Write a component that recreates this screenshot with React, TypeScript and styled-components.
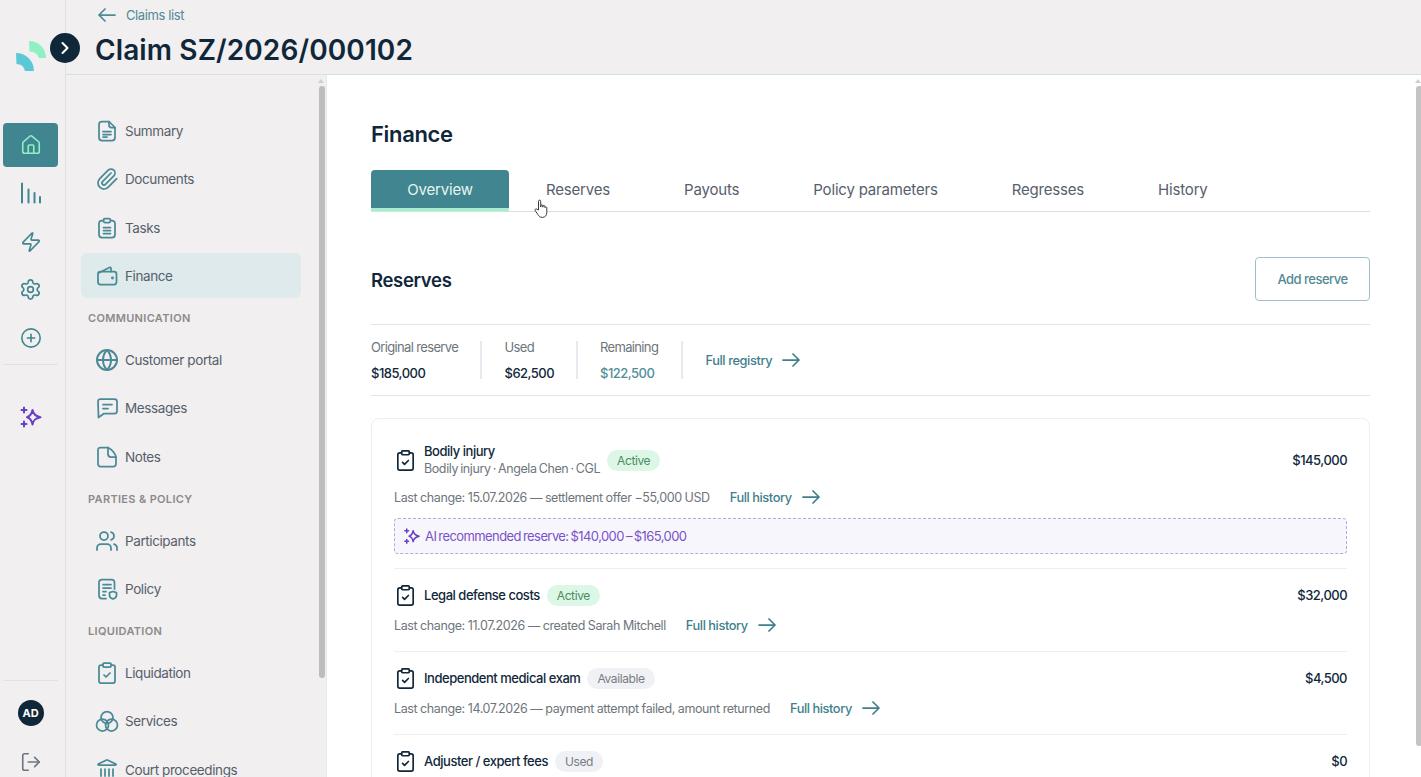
import React, {FunctionComponent, ReactNode} from 'react'
import styled, {createGlobalStyle} from 'styled-components'
import {
    ChevronRight,
    CirclePlus,
    ClipboardCheck,
    Globe,
    House,
    Landmark,
    LogOut,
    Paperclip,
    Settings,
    Users,
    Zap
} from 'lucide-react'

const GlobalStyle = createGlobalStyle`
  html, body {
    margin: 0;
    height: 100%;
    overflow: hidden;
    background: #f1eff0;
    color: #10273a;
    font-family: 'Inter', 'Liberation Sans', sans-serif;
    letter-spacing: -0.025em;
  }
`

const Page = styled.div`
  position: relative;
  display: grid;
  grid-template-columns: 66px 1fr;
  height: 777px;
  overflow: hidden;
`

const Rail = styled.aside`
  display: flex;
  flex-direction: column;
  align-items: center;
  border-right: 1px solid #d9e0e6;
  padding: 40px 7px 2px 3px;
  box-sizing: border-box;
`

const LogoMark = styled.svg`
  width: 32px;
  height: 32px;
  margin-bottom: 51px;
  flex-shrink: 0;
`

const RailItem = styled.div<{$active?: boolean}>`
  display: flex;
  align-items: center;
  justify-content: center;
  width: 55px;
  height: 44px;
  margin-bottom: 4.3px;
  flex-shrink: 0;
  border-radius: 4px;
  background: ${p => (p.$active ? '#40858f' : 'transparent')};
  color: ${p => (p.$active ? '#8ff0c4' : '#40858f')};
`

const RailRule = styled.div`
  width: 55px;
  height: 1px;
  flex-shrink: 0;
  background: #dfe3e8;
`

const TopRule = styled(RailRule)`
  margin-bottom: 30px;
`

const BottomRule = styled(RailRule)`
  margin-top: auto;
  margin-bottom: 19px;
`

const Avatar = styled.div`
  display: flex;
  align-items: center;
  justify-content: center;
  width: 26px;
  height: 26px;
  margin-bottom: 25px;
  flex-shrink: 0;
  border-radius: 50%;
  background: #10273a;
  color: #fff;
  font-size: 11px;
  font-weight: 700;
  letter-spacing: 0;
`

const Logout = styled.div`
  display: flex;
  height: 24px;
  color: #6d7680;
`

const Toggle = styled.div`
  position: absolute;
  left: 50px;
  top: 33px;
  z-index: 2;
  display: flex;
  align-items: center;
  justify-content: center;
  width: 30px;
  height: 30px;
  border-radius: 50%;
  background: #10273a;
  color: #fff;
`

const Right = styled.div`
  display: flex;
  flex-direction: column;
  min-width: 0;
  height: 777px;
`

const Header = styled.header`
  height: 75px;
  flex-shrink: 0;
  padding: 5px 0 0 29px;
  box-sizing: border-box;
  border-bottom: 1px solid #d5dfe6;
`

const BackLink = styled.div`
  display: flex;
  align-items: center;
  gap: 10px;
  height: 20px;
  padding-left: 3px;
  color: #4f8a96;
  font-size: 13px;
`

const ClaimTitle = styled.h1`
  margin: 5px 0 0;
  font-size: 28px;
  line-height: 40px;
  font-weight: 600;
  letter-spacing: 0.004em;
  color: #10273a;
`

const Body = styled.div`
  flex: 1;
  display: grid;
  grid-template-columns: 261px 1fr;
  min-height: 0;
`

const SubNav = styled.nav`
  position: relative;
  display: flex;
  flex-direction: column;
  gap: 3.3px;
  padding: 33.5px 0 0 15px;
  border-right: 1px solid #e8e8ea;
  overflow: hidden;
`

const NavItem = styled.div<{$active?: boolean}>`
  display: flex;
  align-items: center;
  gap: 6px;
  width: 220px;
  height: 45px;
  flex-shrink: 0;
  padding-left: 14px;
  box-sizing: border-box;
  border-radius: 6px;
  background: ${p => (p.$active ? '#deeaec' : 'transparent')};
  color: #56606b;
  font-size: 13.5px;

  svg {
    flex-shrink: 0;
    color: #4a8a96;
  }
`

const NavLabel = styled.div`
  display: flex;
  align-items: center;
  height: 32.5px;
  flex-shrink: 0;
  padding-left: 7px;
  color: #8c8a8a;
  font-size: 11px;
  font-weight: 600;
  letter-spacing: 0.03em;
`

const ScrollArrow = styled.div`
  position: absolute;
  width: 0;
  height: 0;
  border-left: 3px solid transparent;
  border-right: 3px solid transparent;
  border-bottom: 4px solid #cfcfcf;
`

const SubNavArrow = styled(ScrollArrow)`
  right: 2px;
  top: 4px;
`

const SubNavThumb = styled.div`
  position: absolute;
  right: 1px;
  top: 11px;
  width: 6px;
  height: 592px;
  border-radius: 3px;
  background: #bdbdbd;
`

const Main = styled.main`
  position: relative;
  background: #fff;
  padding: 44px 51px 0 44px;
  overflow: hidden;
`

const MainArrow = styled(ScrollArrow)`
  right: 0;
  top: 4px;
`

const MainThumb = styled.div`
  position: absolute;
  right: 0;
  top: 11px;
  width: 5px;
  height: 660px;
  border-radius: 3px 0 0 3px;
  background: #c4c4c4;
`

const PageTitle = styled.h2`
  margin: 0 0 21px;
  font-size: 22px;
  line-height: 30px;
  font-weight: 600;
  letter-spacing: -0.015em;
`

const Tabs = styled.div`
  display: flex;
  height: 42px;
  box-sizing: border-box;
  border-bottom: 1px solid #d9e0e4;
`

const Tab = styled.div<{$active?: boolean}>`
  display: flex;
  align-items: center;
  justify-content: center;
  height: 41px;
  width: ${p => (p.$active ? '138px' : 'auto')};
  padding: ${p => (p.$active ? '0' : '0 37px')};
  box-sizing: border-box;
  border-radius: 4px 4px 0 0;
  border-bottom: 3px solid ${p => (p.$active ? '#a5efcf' : 'transparent')};
  background: ${p => (p.$active ? '#40858f' : 'transparent')};
  color: ${p => (p.$active ? '#e6f5f2' : '#56606b')};
  font-size: 15px;
  letter-spacing: -0.012em;
`

const Cursor = styled.svg`
  position: absolute;
  left: 207px;
  top: 124px;
  z-index: 2;
`

const SectionHead = styled.div`
  display: flex;
  align-items: center;
  justify-content: space-between;
  margin-top: 45px;
  padding-bottom: 23px;
  border-bottom: 1px solid #e4e7ea;
`

const SectionTitle = styled.h3`
  margin: 2px 0 0;
  font-size: 18.5px;
  font-weight: 600;
  letter-spacing: -0.018em;
`

const OutlineButton = styled.button`
  width: 115px;
  height: 44px;
  padding: 0;
  border: 1px solid #9fc0c8;
  border-radius: 4px;
  background: #fff;
  color: #4f8a96;
  font-family: inherit;
  font-size: 13px;
  font-weight: 500;
  letter-spacing: -0.04em;
`

const Stats = styled.div`
  display: flex;
  align-items: center;
  height: 70px;
  border-bottom: 1px solid #e4e7ea;
`

const Stat = styled.div<{$width: number}>`
  display: flex;
  flex-direction: column;
  justify-content: center;
  gap: 10px;
  width: ${p => p.$width}px;
  height: 38px;
  box-sizing: content-box;
  margin-right: 22.5px;
  border-right: 2px solid #e6eaf0;
  white-space: nowrap;
`

const StatLabel = styled.div`
  color: #6e757c;
  font-size: 13px;
  line-height: 16px;
  letter-spacing: -0.05em;
`

const StatValue = styled.div<{$accent?: boolean}>`
  color: ${p => (p.$accent ? '#4f8f9b' : '#10273a')};
  font-size: 13px;
  line-height: 16px;
  font-weight: 500;
  letter-spacing: -0.04em;
`

const LinkRow = styled.span`
  display: inline-flex;
  align-items: center;
  gap: 10px;
  color: #40808c;
  font-size: 12.8px;
  font-weight: 500;
`

const Card = styled.section`
  margin-top: 22px;
  padding: 0 22px;
  border: 1px solid #eceef0;
  border-radius: 8px;
`

const Row = styled.div<{$first?: boolean}>`
  padding: ${p => (p.$first ? '24px 0 14px' : '14px 0 16px')};
  border-bottom: 1px solid #eceef0;
`

const RowHead = styled.div`
  display: flex;
  align-items: center;
  gap: 7px;
  min-height: 24px;

  > svg {
    flex-shrink: 0;
    color: #10273a;
  }
`

const RowTitles = styled.div`
  display: flex;
  flex-direction: column;
`

const RowTitle = styled.div`
  color: #10273a;
  font-size: 13px;
  line-height: 17px;
  font-weight: 500;
  letter-spacing: -0.036em;
`

const RowSub = styled.div`
  color: #6e757c;
  font-size: 12.5px;
  line-height: 17px;
  word-spacing: -1px;
`

const Pill = styled.span<{$tone: 'green' | 'grey'}>`
  display: inline-flex;
  align-items: center;
  height: 21px;
  padding: 0 10px;
  border-radius: 11px;
  background: ${p => (p.$tone === 'green' ? '#dcf7e5' : '#eff1f5')};
  color: ${p => (p.$tone === 'green' ? '#4c8a62' : '#767d85')};
  font-size: 12px;
`

const Amount = styled.div`
  margin-left: auto;
  color: #10273a;
  font-size: 13px;
  font-weight: 500;
  letter-spacing: -0.04em;
`

const RowMeta = styled.div<{$first?: boolean}>`
  display: flex;
  align-items: center;
  gap: 20px;
  height: 20px;
  margin-top: ${p => (p.$first ? 10 : 8)}px;
  color: #6e757c;
  font-size: 12.5px;
  word-spacing: -0.2px;
`

const AiBox = styled.div`
  display: flex;
  align-items: center;
  gap: 4px;
  height: 36px;
  margin-top: 11px;
  padding-left: 8px;
  box-sizing: border-box;
  border: 1px dashed #b9a5e0;
  border-radius: 4px;
  background: #f7f6fd;
  color: #7a52c8;
  font-size: 13px;
  letter-spacing: -0.045em;
  word-spacing: -1px;
`

const Spark: FunctionComponent<{size: number}> = ({size}) => (
    <svg width={size} height={size} viewBox="0 0 24 24" fill="none" stroke="#6a3fc4" strokeWidth="2" strokeLinejoin="round" strokeLinecap="round">
        <path d="M13.5 5c.8 4.3 2.7 6.200 8 7.200-5.300 1-7.200 2.900-8 7.300-.8-4.400-2.300-6.300-5.500-7.300 3.200-1 4.700-2.900 5.500-7.200z"/>
        <path d="M5 2.500v5M2.500 5h5M5 16.500v5M2.500 19h5"/>
    </svg>
)

const Arrow: FunctionComponent<{back?: boolean}> = ({back}) => (
    <svg width="18" height="14" viewBox="0 0 18 14" fill="none" stroke="currentColor" strokeWidth="1.75" strokeLinecap="round" strokeLinejoin="round">
        <path d={back ? 'M17 7H1M7 1 1 7l6 6' : 'M1 7h16M11 1l6 6-6 6'}/>
    </svg>
)

const Glyph: FunctionComponent<{children: ReactNode, width?: number}> = ({children, width = 1.75}) => (
    <svg width="24" height="24" viewBox="0 0 24 24" fill="none" stroke="currentColor" strokeWidth={width} strokeLinejoin="round" strokeLinecap="round">
        {children}
    </svg>
)

const FileIcon = () => (
    <Glyph>
        <path d="M7 2.500h7l6 6V18.500a3 3 0 0 1-3 3H7a3 3 0 0 1-3-3v-13a3 3 0 0 1 3-3z"/>
        <path d="M14 2.500V6a2.500 2.500 0 0 0 2.500 2.500H20"/>
        <path d="M8 12.500h8M8 15.500h8M8 18h4"/>
    </Glyph>
)

const ClipboardIcon = () => (
    <Glyph>
        <path d="M8.500 4.500H7a3 3 0 0 0-3 3v11a3 3 0 0 0 3 3h10a3 3 0 0 0 3-3v-11a3 3 0 0 0-3-3h-1.500"/>
        <rect x="8.500" y="2.500" width="7" height="4" rx="1.500"/>
        <path d="M8.500 11.500h7M8.500 14.500h7M8.500 17.500h7"/>
    </Glyph>
)

const MessageIcon = () => (
    <Glyph>
        <path d="M5.500 3h14a2.500 2.500 0 0 1 2.500 2.500V15a2.500 2.500 0 0 1-2.500 2.500H9L3.500 21.500 3 5.500A2.500 2.500 0 0 1 5.500 3z"/>
        <path d="M8 8.500h9M8 12.500h5"/>
    </Glyph>
)

const WalletIcon = () => (
    <Glyph>
        <rect x="3" y="7.500" width="18.500" height="13" rx="2.500"/>
        <path d="M3.500 9 14.500 3.500c.8-.3 1.500.2 1.500 1V7.500"/>
        <circle cx="17.500" cy="14" r=".6"/>
    </Glyph>
)

const NoteIcon = () => (
    <Glyph>
        <path d="M5.500 2.500h7.500c4.500 2.500 7 5.500 8 9.500v7a2.500 2.500 0 0 1-2.500 2.500h-13A2.500 2.500 0 0 1 3 19V5a2.500 2.500 0 0 1 2.500-2.500z"/>
        <path d="M13 2.500V9a3 3 0 0 0 3 3h5"/>
    </Glyph>
)

const PolicyIcon = () => (
    <Glyph>
        <path d="M11 21.500H7a3 3 0 0 1-3-3v-13a3 3 0 0 1 3-3h9.500a3 3 0 0 1 3 3V12"/>
        <path d="M8 7.500h8M8 11h8M8 14.500h3M8 18h2"/>
        <path d="M18 14.500l3.500 1.200v2.500c0 1.800-1.400 3-3.500 3.800-2.100-.8-3.500-2-3.500-3.800v-2.500z"/>
    </Glyph>
)

const ServicesIcon = () => (
    <Glyph>
        <circle cx="12" cy="8.500" r="6"/>
        <circle cx="7.500" cy="16" r="6"/>
        <circle cx="16.500" cy="16" r="6"/>
    </Glyph>
)

const BarsIcon = () => (
    <Glyph width={2}>
        <path d="M3 2.500v19M9.500 8.500v13M15.500 12v9.500M21 16v5.500"/>
    </Glyph>
)

const CursorIcon = () => (
    <Cursor width="16" height="20" viewBox="0 0 16 20" fill="#fff" stroke="#3c3c3c" strokeWidth="1" strokeLinejoin="round">
        <path d="M4.500 11V2.200c0-1.500 2.200-1.500 2.200 0V8l.1-1.200c0-1.300 2-1.300 2 0V8.200l.1-.9c.1-1.200 2-1.200 2 0v1.300c.1-1 1.900-1 1.900.2v4.600c0 3-1.600 5-4.400 5-2.400 0-3.300-.9-4.500-2.900L1.200 11.600c-.8-1.300.9-2.400 1.800-1.300z"/>
    </Cursor>
)

type NavEntry = {label: string, icon: ReactNode, active?: boolean} | {section: string}

const navEntries: NavEntry[] = [
    {label: 'Summary', icon: <FileIcon/>},
    {label: 'Documents', icon: <Paperclip size={24} strokeWidth={1.75}/>},
    {label: 'Tasks', icon: <ClipboardIcon/>},
    {label: 'Finance', icon: <WalletIcon/>, active: true},
    {section: 'COMMUNICATION'},
    {label: 'Customer portal', icon: <Globe size={24} strokeWidth={2}/>},
    {label: 'Messages', icon: <MessageIcon/>},
    {label: 'Notes', icon: <NoteIcon/>},
    {section: 'PARTIES & POLICY'},
    {label: 'Participants', icon: <Users size={24} strokeWidth={1.75}/>},
    {label: 'Policy', icon: <PolicyIcon/>},
    {section: 'LIQUIDATION'},
    {label: 'Liquidation', icon: <ClipboardCheck size={24} strokeWidth={1.75}/>},
    {label: 'Services', icon: <ServicesIcon/>},
    {label: 'Court proceedings', icon: <Landmark size={24} strokeWidth={1.75}/>}
]

const tabs = ['Overview', 'Reserves', 'Payouts', 'Policy parameters', 'Regresses', 'History']

const stats = [
    {label: 'Original reserve', value: '$185,000', width: 109},
    {label: 'Used', value: '$62,500', width: 71},
    {label: 'Remaining', value: '$122,500', width: 81, accent: true}
]

const reserves = [
    {title: 'Legal defense costs', pill: 'Active', tone: 'green' as const, amount: '$32,000', meta: 'Last change: 11.07.2026 — created Sarah Mitchell'},
    {title: 'Independent medical exam', pill: 'Available', tone: 'grey' as const, amount: '$4,500', meta: 'Last change: 14.07.2026 — payment attempt failed, amount returned'},
    {title: 'Adjuster / expert fees', pill: 'Used', tone: 'grey' as const, amount: '$0', meta: ''}
]

const FullHistory = () => (
    <LinkRow>
        Full history
        <Arrow/>
    </LinkRow>
)

const App = () => {
    return (
        <React.Fragment>
            <GlobalStyle/>
            <Page>
                <Rail>
                    <LogoMark viewBox="0 0 32 32">
                        <path d="M14 1A17 17 0 0 1 31 18H24A10 10 0 0 0 14.500 11.500Z" fill="#8ff0c4"/>
                        <path d="M1 13A18 18 0 0 1 19 31H10A9 9 0 0 0 1.500 24Z" fill="#5cc8d6"/>
                    </LogoMark>
                    <RailItem $active><House size={22} strokeWidth={1.75}/></RailItem>
                    <RailItem><BarsIcon/></RailItem>
                    <RailItem><Zap size={22} strokeWidth={1.75}/></RailItem>
                    <RailItem><Settings size={23} strokeWidth={1.75}/></RailItem>
                    <RailItem><CirclePlus size={22} strokeWidth={1.75}/></RailItem>
                    <TopRule/>
                    <RailItem><Spark size={24}/></RailItem>
                    <BottomRule/>
                    <Avatar>AD</Avatar>
                    <Logout><LogOut size={22} strokeWidth={1.75}/></Logout>
                </Rail>
                <Toggle><ChevronRight size={20} strokeWidth={2.5}/></Toggle>
                <Right>
                    <Header>
                        <BackLink>
                            <Arrow back/>
                            Claims list
                        </BackLink>
                        <ClaimTitle>Claim SZ/2026/000102</ClaimTitle>
                    </Header>
                    <Body>
                        <SubNav>
                            <SubNavArrow/>
                            <SubNavThumb/>
                            {navEntries.map(entry => 'section' in entry ? (
                                <NavLabel key={entry.section}>{entry.section}</NavLabel>
                            ) : (
                                <NavItem key={entry.label} $active={entry.active}>
                                    {entry.icon}
                                    {entry.label}
                                </NavItem>
                            ))}
                        </SubNav>
                        <Main>
                            <MainArrow/>
                            <MainThumb/>
                            <PageTitle>Finance</PageTitle>
                            <Tabs>
                                {tabs.map((tab, i) => (
                                    <Tab key={tab} $active={i === 0}>{tab}</Tab>
                                ))}
                            </Tabs>
                            <CursorIcon/>
                            <SectionHead>
                                <SectionTitle>Reserves</SectionTitle>
                                <OutlineButton>Add reserve</OutlineButton>
                            </SectionHead>
                            <Stats>
                                {stats.map(stat => (
                                    <Stat key={stat.label} $width={stat.width}>
                                        <StatLabel>{stat.label}</StatLabel>
                                        <StatValue $accent={stat.accent}>{stat.value}</StatValue>
                                    </Stat>
                                ))}
                                <LinkRow>
                                    Full registry
                                    <Arrow/>
                                </LinkRow>
                            </Stats>
                            <Card>
                                <Row $first>
                                    <RowHead>
                                        <ClipboardCheck size={23} strokeWidth={1.75}/>
                                        <RowTitles>
                                            <RowTitle>Bodily injury</RowTitle>
                                            <RowSub>Bodily injury · Angela Chen · CGL</RowSub>
                                        </RowTitles>
                                        <Pill $tone="green">Active</Pill>
                                        <Amount>$145,000</Amount>
                                    </RowHead>
                                    <RowMeta $first>
                                        Last change: 15.07.2026 — settlement offer −55,000 USD
                                        <FullHistory/>
                                    </RowMeta>
                                    <AiBox>
                                        <Spark size={18}/>
                                        AI recommended reserve: $140,000 – $165,000
                                    </AiBox>
                                </Row>
                                {reserves.map(item => (
                                    <Row key={item.title}>
                                        <RowHead>
                                            <ClipboardCheck size={23} strokeWidth={1.75}/>
                                            <RowTitle>{item.title}</RowTitle>
                                            <Pill $tone={item.tone}>{item.pill}</Pill>
                                            <Amount>{item.amount}</Amount>
                                        </RowHead>
                                        {item.meta && (
                                            <RowMeta>
                                                {item.meta}
                                                <FullHistory/>
                                            </RowMeta>
                                        )}
                                    </Row>
                                ))}
                            </Card>
                        </Main>
                    </Body>
                </Right>
            </Page>
        </React.Fragment>
    )
}

export default App
